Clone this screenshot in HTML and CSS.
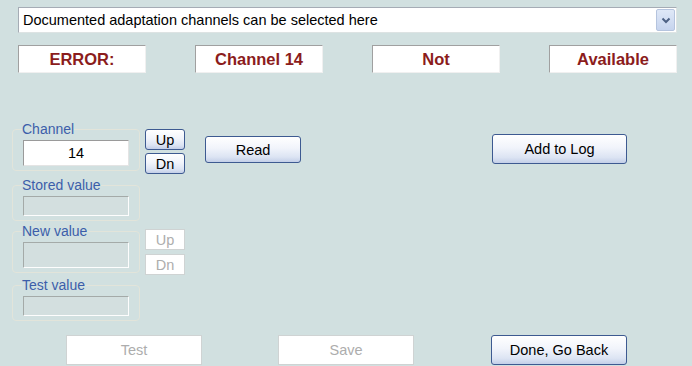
FILE: index.html
```html
<!DOCTYPE html>
<html lang="en">
<head>
    <meta charset="UTF-8">
    <title>Adaptation</title>
    <link rel="stylesheet" href="styles.css">
</head>
<body>
    <div class="page">
        <div class="combo">
            <span class="combo-text">Documented adaptation channels can be selected here</span>
            <span class="combo-arrow">
                <svg width="10" height="7" viewBox="0 0 10 7"><path d="M1.5 1.5 L5 5 L8.5 1.5" fill="none" stroke="#4d6184" stroke-width="2"/></svg>
            </span>
        </div>

        <div class="status-row">
            <div class="status">ERROR:</div>
            <div class="status">Channel 14</div>
            <div class="status">Not</div>
            <div class="status">Available</div>
        </div>

        <div class="main">
            <div class="fields">
                <div class="field-row">
                    <fieldset class="group">
                        <legend>Channel</legend>
                        <input class="value tall" type="text" value="14">
                    </fieldset>
                    <div class="updn first">
                        <button class="btn small">Up</button>
                        <button class="btn small">Dn</button>
                    </div>
                </div>
                <fieldset class="group stored">
                    <legend>Stored value</legend>
                    <input class="value off" type="text" disabled>
                </fieldset>
                <div class="field-row new">
                    <fieldset class="group">
                        <legend>New value</legend>
                        <input class="value tall off" type="text" disabled>
                    </fieldset>
                    <div class="updn second">
                        <button class="btn small" disabled>Up</button>
                        <button class="btn small" disabled>Dn</button>
                    </div>
                </div>
                <fieldset class="group testval">
                    <legend>Test value</legend>
                    <input class="value off" type="text" disabled>
                </fieldset>
            </div>
            <button class="btn read">Read</button>
            <button class="btn log">Add to Log</button>
        </div>

        <div class="bottom-row">
            <button class="btn wide test" disabled>Test</button>
            <button class="btn wide save" disabled>Save</button>
            <button class="btn wide done">Done, Go Back</button>
        </div>
    </div>
</body>
</html>
```

FILE: styles.css
```css
* {
    margin: 0;
    padding: 0;
    box-sizing: border-box;
}

body {
    background: #d1e0e0;
    font-family: 'Liberation Sans', Arial, sans-serif;
    font-size: 14.5px;
    color: #000;
    overflow: hidden;
}

.page {
    width: 692px;
    height: 366px;
    padding-top: 7px;
}

.combo {
    display: flex;
    align-items: center;
    margin-left: 18px;
    width: 659px;
    height: 26px;
    background: #fff;
    border: 1px solid #a5acb5;
    border-right-color: #dde3e3;
    border-bottom-color: #dde3e3;
}

.combo-text {
    flex: 1;
    padding-left: 4px;
    white-space: nowrap;
}

.combo-arrow {
    display: flex;
    align-items: center;
    justify-content: center;
    width: 19px;
    height: 22px;
    margin-right: 1px;
    border: 1px solid #b5c4de;
    border-radius: 2px;
    background: linear-gradient(#dfe8f7, #c6d4ee);
}

.status-row {
    display: flex;
    justify-content: space-between;
    margin: 12px 0 0 18px;
    width: 659px;
}

.status {
    width: 128px;
    height: 28px;
    background: #fff;
    border: 1px solid #a0a0a0;
    border-right-color: #f0f0f0;
    border-bottom-color: #f0f0f0;
    color: #8b1c1c;
    font-weight: bold;
    font-size: 16.5px;
    text-align: center;
    line-height: 26px;
}

.main {
    display: flex;
    align-items: flex-start;
    margin-top: 48px;
    padding-left: 12px;
}

.fields {
    display: flex;
    flex-direction: column;
}

.field-row {
    display: flex;
    align-items: flex-start;
}

.stored {
    margin-top: 3px;
}

.new {
    margin-top: 2px;
}

.testval {
    margin-top: 2px;
}

.group {
    width: 128px;
    padding: 0 10px 4px 10px;
    border: 1px solid #e2e4da;
    border-radius: 4px;
}

.group legend {
    margin-left: -1px;
    font-size: 14px;
    line-height: 16px;
    color: #3c5eaa;
}

.value {
    display: block;
    width: 106px;
    height: 20px;
    margin-top: 3px;
    background: #fff;
    border: 1px solid #9a9a9a;
    border-right-color: #e4e4e4;
    border-bottom-color: #e4e4e4;
    font-family: inherit;
    font-size: 14.5px;
    text-align: center;
    outline: none;
}

.value.tall {
    height: 26px;
}

.value.off {
    background: #d3dfdf;
    border-color: #a4aaa8;
    border-right-color: #fdfdfd;
    border-bottom-color: #fdfdfd;
}

.updn {
    display: flex;
    flex-direction: column;
    margin-left: 5px;
}

.updn.first {
    margin-top: 8px;
    gap: 3px;
}

.updn.second {
    margin-top: 6px;
    gap: 4px;
}

.btn {
    font-family: inherit;
    font-size: 14.5px;
    color: #000;
    border: 1px solid #3d5a91;
    border-radius: 3px;
    background: linear-gradient(#ffffff 0%, #f1f4fb 45%, #dce4f3 80%, #c3cfe8 100%);
}

.btn:disabled {
    color: #adadad;
    background: #fff;
    border: 1px solid #cfd3d3;
    border-radius: 0;
}

.small {
    width: 40px;
    height: 21px;
    line-height: 18px;
}

.read {
    width: 96px;
    height: 27px;
    margin: 15px 0 0 20px;
}

.log {
    width: 135px;
    height: 30px;
    margin: 13px 65px 0 auto;
}

.bottom-row {
    display: flex;
    margin-top: 14px;
}

.wide {
    width: 136px;
    height: 30px;
}

.test {
    margin-left: 66px;
}

.save {
    margin-left: 76px;
}

.done {
    margin-left: 77px;
}
```
